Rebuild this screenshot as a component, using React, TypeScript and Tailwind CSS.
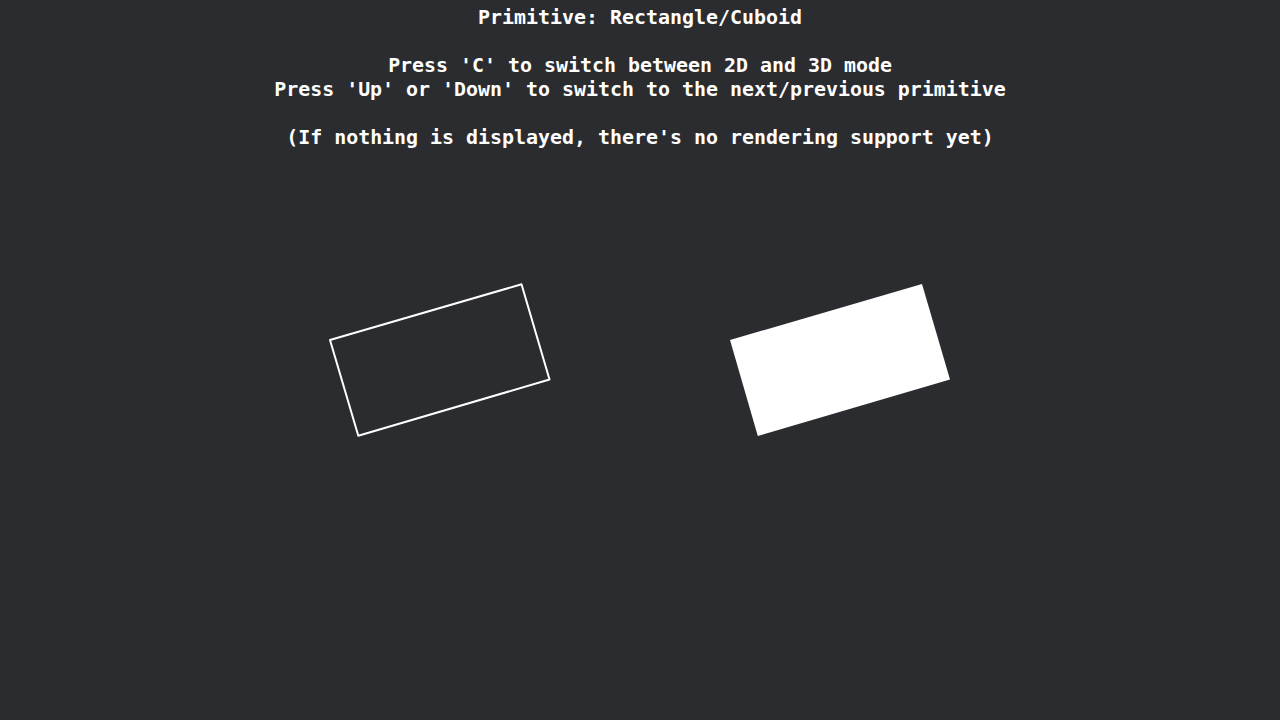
export default function App() {
  return (
    <div className="relative h-[720px] w-[1280px] overflow-hidden bg-[#2b2c30]">
      <svg
        className="absolute inset-0"
        width="1280"
        height="720"
        viewBox="0 0 1280 720"
      >
        <polygon
          points="330,340 521.5,284.3 549.5,379.5 358.3,435.7"
          fill="none"
          stroke="#ffffff"
          strokeWidth="2"
          strokeLinejoin="round"
        />
        <polygon points="730,340 922,284 950,379.5 757.8,436" fill="#ffffff" />
      </svg>
      <div className="relative flex flex-col items-center pt-[6px] font-['DejaVu_Sans_Mono',monospace] text-[19.93px] font-bold leading-[24px] text-white whitespace-pre">
        <div>Primitive: Rectangle/Cuboid</div>
        <div> </div>
        <div>Press 'C' to switch between 2D and 3D mode</div>
        <div>Press 'Up' or 'Down' to switch to the next/previous primitive</div>
        <div> </div>
        <div>(If nothing is displayed, there's no rendering support yet)</div>
      </div>
    </div>
  );
}
